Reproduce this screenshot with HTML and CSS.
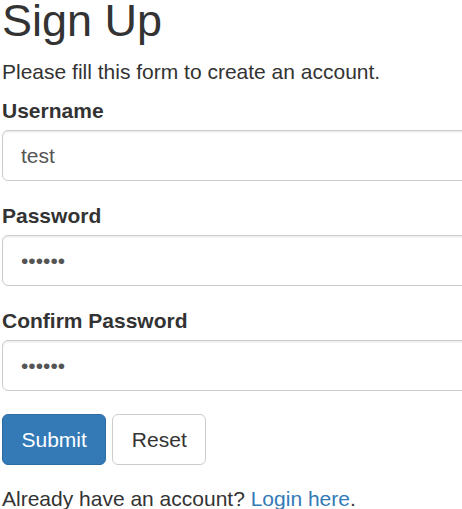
FILE: index.html
```html
<!DOCTYPE html>
<html lang="en">
<head>
<meta charset="utf-8">
<title>Sign Up</title>
<link rel="stylesheet" href="styles.css">
</head>
<body>
<div class="wrapper">
  <h2 class="title">Sign Up</h2>
  <p class="intro">Please fill this form to create an account.</p>
  <form class="form" onsubmit="return false">
    <div class="form-group">
      <label class="label">Username</label>
      <input class="form-control" type="text" value="test">
    </div>
    <div class="form-group">
      <label class="label">Password</label>
      <input class="form-control" type="password" value="123456">
    </div>
    <div class="form-group form-group-last">
      <label class="label">Confirm Password</label>
      <input class="form-control" type="password" value="123456">
    </div>
    <div class="actions">
      <button class="btn btn-primary" type="submit">Submit</button>
      <button class="btn btn-default" type="reset">Reset</button>
    </div>
    <p class="footer-text">Already have an account? <a class="link" href="#">Login here</a>.</p>
  </form>
</div>
</body>
</html>
```
FILE: styles.css
```css
html, body {
  margin: 0;
  padding: 0;
  overflow: hidden;
  background: #fff;
}
body {
  font-family: "Liberation Sans", Arial, Helvetica, sans-serif;
  font-size: 21px;
  line-height: 30px;
  color: #333;
}
.wrapper {
  width: 525px;
  padding-left: 2px;
}
.title {
  font-size: 45px;
  line-height: 50px;
  font-weight: 400;
  margin: -4px 0 11px 0;
}
.intro {
  margin: 0 0 9px 0;
}
.form {
  margin: 0;
}
.form-group {
  margin-bottom: 20px;
}
.form-group-last {
  margin-bottom: 23px;
}
.label {
  display: inline-block;
  font-weight: 700;
  margin-bottom: 4px;
}
.form-control {
  display: block;
  box-sizing: border-box;
  width: 100%;
  height: 51px;
  padding: 9px 18px;
  font-family: inherit;
  font-size: 21px;
  line-height: 30px;
  color: #555;
  background: #fff;
  border: 1px solid #ccc;
  border-radius: 6px;
  box-shadow: inset 0 1.5px 1.5px rgba(0, 0, 0, 0.075);
  outline: none;
  margin: 0;
}
.actions {
  display: flex;
  gap: 6px;
}
.btn {
  box-sizing: border-box;
  height: 51px;
  padding: 9px 18.5px;
  font-family: inherit;
  font-size: 21px;
  line-height: 30px;
  border: 1px solid transparent;
  border-radius: 6px;
  margin: 0;
  cursor: pointer;
}
.btn-primary {
  background: #337ab7;
  border-color: #2e6da4;
  color: #fff;
}
.btn-default {
  background: #fff;
  border-color: #ccc;
  color: #333;
}
.footer-text {
  margin: 19px 0 0 0;
}
.link {
  color: #337ab7;
  text-decoration: none;
}
```
